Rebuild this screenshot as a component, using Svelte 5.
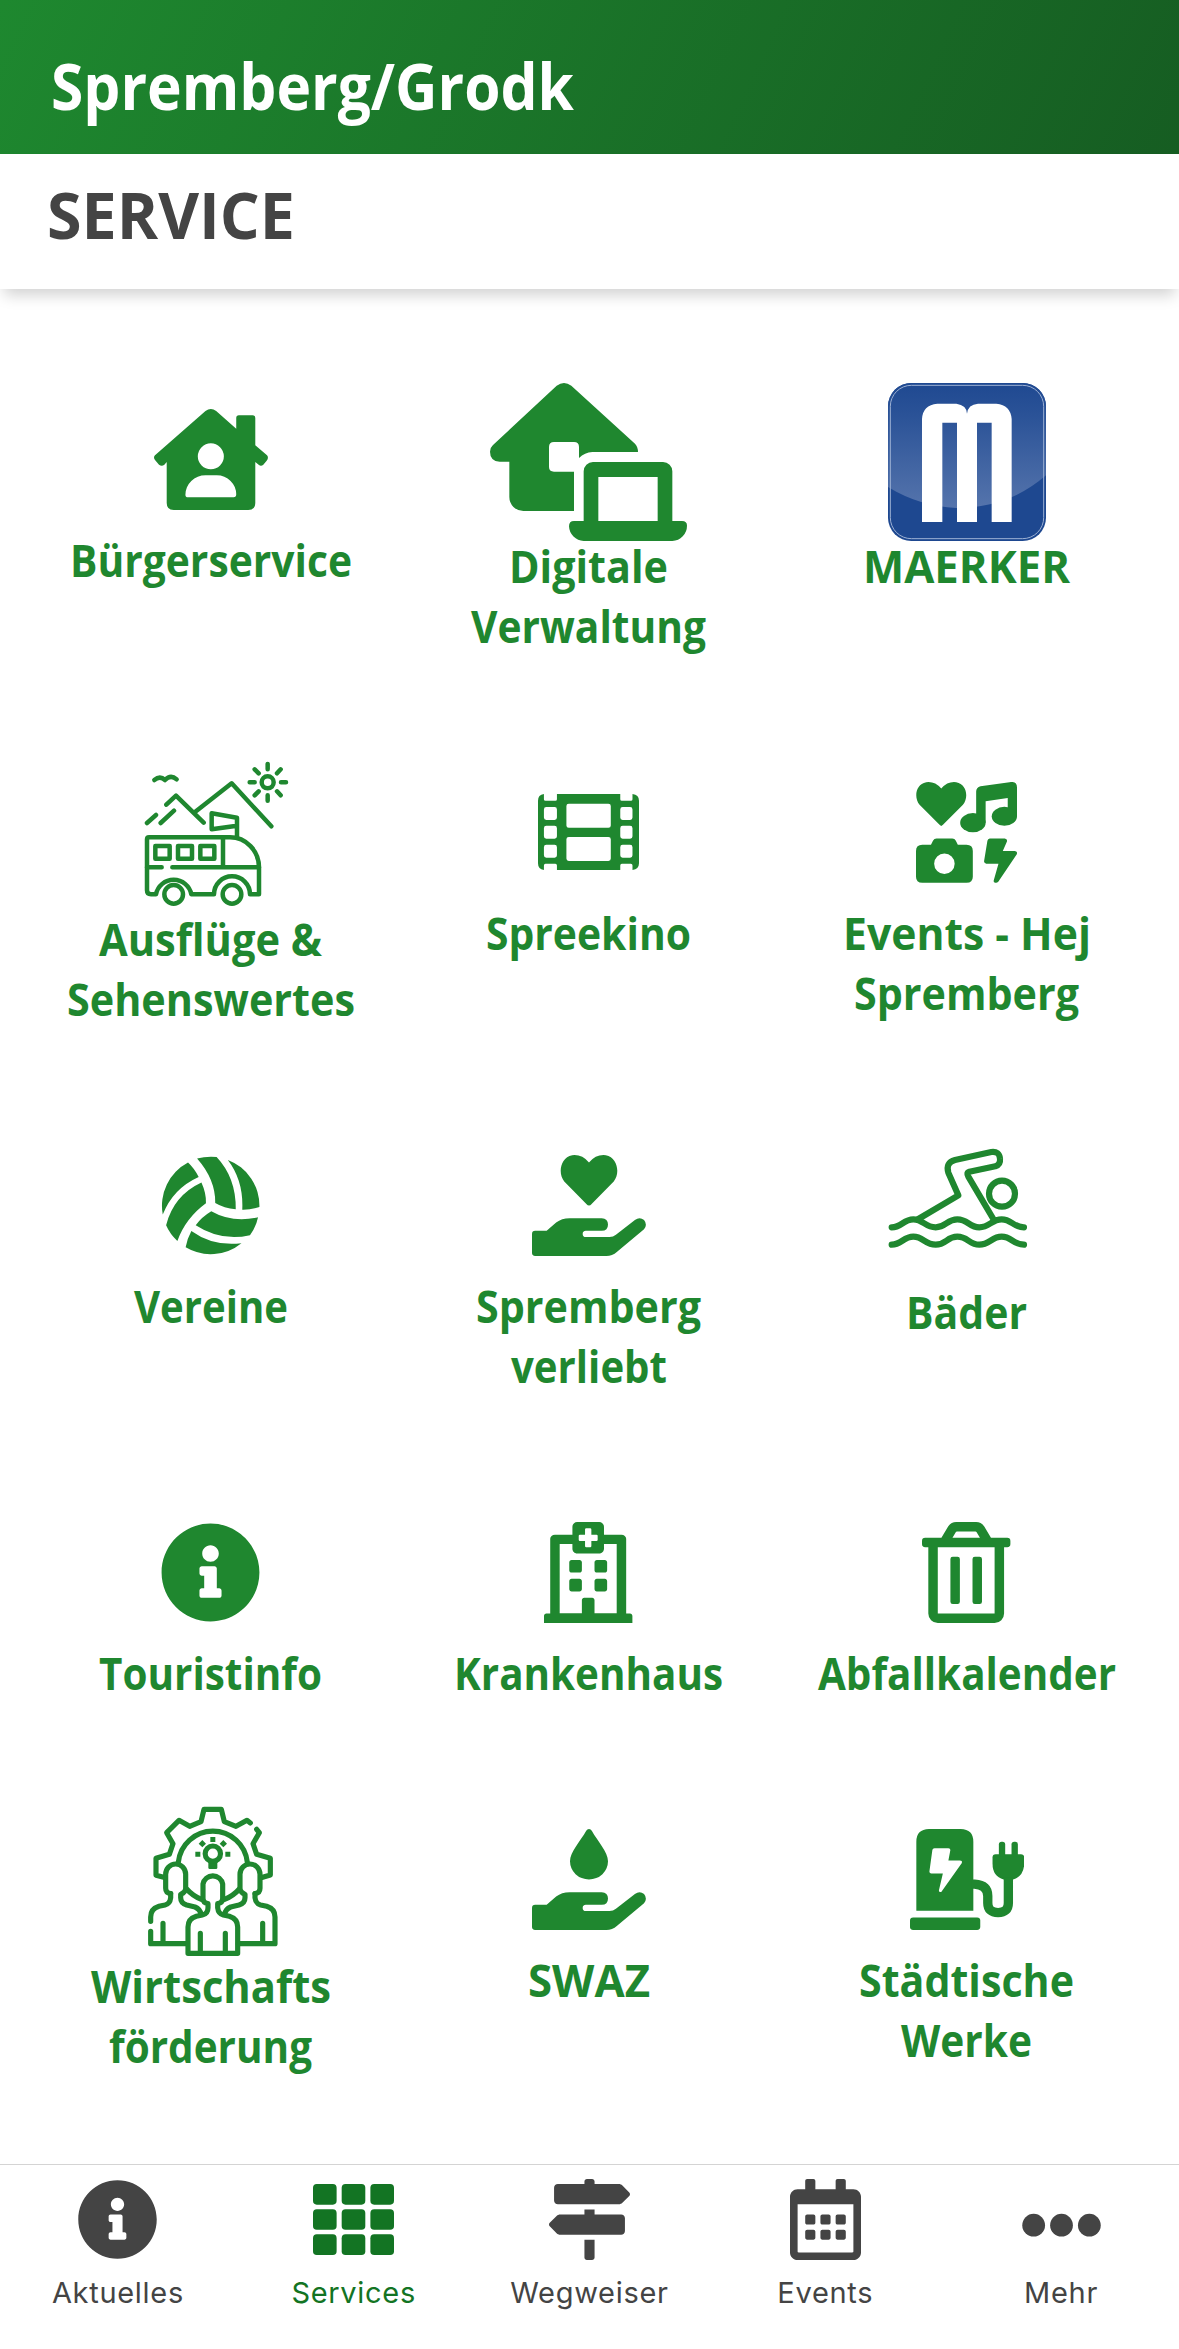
<script lang="ts">
  type Icon = {
    viewBox: string;
    width: number;
    height: number;
    fills?: string[];
    strokes?: string[];
    strokeWidth?: number;
  };

  type Line = { text: string; width: number };

  function circle(cx: number, cy: number, r: number) {
    return `M${cx - r} ${cy}a${r} ${r} 0 1 0 ${2 * r} 0a${r} ${r} 0 1 0 ${-2 * r} 0z`;
  }

  function box(x: number, y: number, w: number, h: number, r: number) {
    return `M${x + r} ${y}h${w - 2 * r}a${r} ${r} 0 0 1 ${r} ${r}v${h - 2 * r}a${r} ${r} 0 0 1 ${-r} ${r}h${2 * r - w}a${r} ${r} 0 0 1 ${-r} ${-r}v${2 * r - h}a${r} ${r} 0 0 1 ${r} ${-r}z`;
  }

  const hand =
    "M16 384H74L122 342Q150 320 190 320H352Q384 322 384 352Q384 384 352 384H272Q256 385 256 400Q256 415 272 416H392Q410 416 424 404L520 329Q545 311 566 330Q585 353 566 376L430 490Q405 512 376 512H16Q0 512 0 496V400Q0 384 16 384Z";

  const info =
    "M256 8C119.043 8 8 119.083 8 256c0 136.997 111.043 248 248 248s248-111.003 248-248C504 119.083 392.957 8 256 8zm0 110c23.196 0 42 18.804 42 42s-18.804 42-42 42-42-18.804-42-42 18.804-42 42-42zm56 254c0 6.627-5.373 12-12 12h-88c-6.627 0-12-5.373-12-12v-24c0-6.627 5.373-12 12-12h12v-64h-12c-6.627 0-12-5.373-12-12v-24c0-6.627 5.373-12 12-12h64c6.627 0 12 5.373 12 12v100h12c6.627 0 12 5.373 12 12v24z";

  const icons: { [key: string]: Icon } = {
    houseUser: {
      viewBox: "0 0 341 303",
      width: 114,
      height: 101,
      fills: [
        "M154 6Q170 -6 186 6L246 59V27Q246 19 254 19H295Q303 19 303 27V109L338 139Q344 146 337 155L327 167Q320 173 313 167L303 159V282Q303 303 282 303H59Q38 303 38 282V159L31 167Q23 173 15 167L3 153Q-3 145 3 139Z" +
          circle(170, 142, 39) +
          "M154 199H188A58 57 0 0 1 246 256Q246 265 238 265H102Q94 265 94 257A60 58 0 0 1 154 199Z",
      ],
    },
    houseLaptop: {
      viewBox: "0 0 591 474",
      width: 197,
      height: 158,
      fills: [
        "M200 8Q222 -8 244 8L435 182Q444 192 444 207H307Q284 208 267 225V192Q267 177 252 177H192Q177 177 177 192V252Q177 266 192 266H252V384H100A42 42 0 0 1 58 342V236H29Q0 234 0 206Q0 194 9 186Z",
        "M309 237H519A28 28 0 0 1 547 265V414H576Q591 414 591 428A46 46 0 0 1 547 474H281A46 46 0 0 1 237 430Q237 414 252 414H281V265A28 28 0 0 1 309 237ZM325 282V414H503V282Z",
      ],
    },
    camper: {
      viewBox: "246 48 474 474",
      width: 158,
      height: 158,
      strokeWidth: 13.5,
      strokes: [
        "M313 120Q330 106 345 120Q362 102 380 118",
        circle(653, 127, 18),
        "M653 72V88M653 166V182M599 127H614M693 127H708M614 88L626 100M692 88L681 100M614 166L626 154M692 166L681 154",
        "M435 216L545 130L664 259M349 194L378 167L461 248M291 249L318 225M332 249L372 212",
        "M561 290V233L485 220V268L561 257",
        "M297 292H540A87 90 0 0 1 627 382V463H600A54 54 0 0 0 492 463H424A54 54 0 0 0 318 463H303Q291 463 291 451V298Q291 292 297 292Z",
        "M519 292V382M367 382H627M291 382H335",
        "M316 318H359V356H316ZM384 318H426V356H384ZM451 318H493V356H451Z",
        circle(371, 463, 28) + circle(546, 463, 28),
      ],
    },
    film: {
      viewBox: "0 64 512 384",
      width: 101,
      height: 76,
      fills: [
        "M30 64V90Q30 98 38 98H88Q96 98 96 90V64H417V90Q417 98 425 98H471Q479 98 479 90V64Q512 68 512 98V414Q512 444 479 448V425Q479 417 471 417H425Q417 417 417 425V448H96V425Q96 417 88 417H38Q30 417 30 425V448Q0 444 0 414V98Q0 68 30 64Z" +
          box(30, 130, 66, 65, 12) +
          box(30, 225, 66, 65, 12) +
          box(30, 321, 66, 65, 12) +
          box(417, 130, 62, 65, 12) +
          box(417, 225, 62, 65, 12) +
          box(417, 321, 62, 65, 12) +
          box(144, 113, 225, 122, 12) +
          box(144, 281, 225, 121, 12),
      ],
    },
    hobbies: {
      viewBox: "0 0 512 512",
      width: 101,
      height: 101,
      fills: [
        "M128 223Q122 221 118 216L18 115C-12 80 -2 10 52 1Q95 -5 128 33Q161 -5 204 1C258 10 268 80 238 115L138 216Q134 221 128 223Z",
        "M305 206V48Q305 27 327 21L474 1Q512 -6 512 28V175H465V81L353 98V206Z",
        "M224 206A64 48 0 0 1 353 206A64 48 0 0 1 224 206Z",
        "M384 174A64 48 0 0 1 512 174A64 48 0 0 1 384 174Z",
        "M32 318H76L86 298Q92 286 104 286H184Q196 286 202 298L212 318H256Q288 318 288 350V480Q288 511 256 511H32Q0 511 0 480V350Q0 318 32 318Z" +
          circle(144, 414, 52),
        "M374 286H450Q464 288 461 301L440 350H500Q516 352 511 366L417 506Q408 514 396 508Q392 504 395 496L418 414H356Q344 412 345 402L362 298Q364 288 374 286Z",
      ],
    },
    volleyball: {
      viewBox: "0 0 512 512",
      width: 101,
      height: 101,
      fills: [
        "M142 38A248 248 0 0 0 14 302Q65 170 196 111Q172 65 142 38Z",
        "M210 140Q235 195 233 245Q130 320 88 436Q50 400 31 356Q70 205 210 140Z",
        "M188 18Q235 5 287 10Q386 115 384 275Q325 270 280 243Q282 125 188 18Z",
        "M344 25A248 248 0 0 1 504 263Q460 278 417 277Q424 130 344 25Z",
        "M260 285Q365 345 497 316Q487 365 456 407Q310 440 181 356Q210 315 260 285Z",
        "M159 385Q270 465 413 447A248 248 0 0 1 130 468Q138 423 159 385Z",
      ],
    },
    handHeart: {
      viewBox: "0 0 576 512",
      width: 114,
      height: 101,
      fills: [
        hand,
        "M288 256Q281 256 276 250L163 134C130 95 142 12 203 1Q252 -5 288 38Q324 -5 373 1C434 12 446 95 413 134L300 250Q295 256 288 256Z",
      ],
    },
    handDroplet: {
      viewBox: "0 0 576 512",
      width: 114,
      height: 101,
      fills: [
        hand,
        "M288 0Q297 0 302 9C331 62 384 116 384 164A96 92 0 0 1 192 164C192 116 245 62 274 9Q279 0 288 0Z",
      ],
    },
    swimmer: {
      viewBox: "114 27 474 474",
      width: 158,
      height: 158,
      strokeWidth: 18.5,
      strokes: [
        "M125 322C155 322 160 298 190 298S225 322 257 322S290 298 322 298S357 322 388 322S425 298 455 298S490 322 522 322",
        "M125 374C155 374 160 350 190 350S225 374 257 374S290 350 322 350S357 374 388 374S425 350 455 350S490 374 522 374",
        "M205 297L325 226L295 158Q286 128 315 120L424 96Q448 93 450 116Q452 134 436 139L358 155Q348 158 355 170L430 297",
        circle(456, 221, 39),
      ],
    },
    info: { viewBox: "0 0 512 512", width: 101, height: 101, fills: [info] },
    hospital: {
      viewBox: "0 0 448 512",
      width: 88.4,
      height: 101,
      fills: [
        "M128 244v-40c0-6.627 5.373-12 12-12h40c6.627 0 12 5.373 12 12v40c0 6.627-5.373 12-12 12h-40c-6.627 0-12-5.373-12-12zm140 12h40c6.627 0 12-5.373 12-12v-40c0-6.627-5.373-12-12-12h-40c-6.627 0-12 5.373-12 12v40c0 6.627 5.373 12 12 12zm-76 84v-40c0-6.627-5.373-12-12-12h-40c-6.627 0-12 5.373-12 12v40c0 6.627 5.373 12 12 12h40c6.627 0 12-5.373 12-12zm76 12h40c6.627 0 12-5.373 12-12v-40c0-6.627-5.373-12-12-12h-40c-6.627 0-12 5.373-12 12v40c0 6.627 5.373 12 12 12zm180 124v36H0v-36c0-6.627 5.373-12 12-12h19.5V85.035C31.5 73.418 42.245 64 55.5 64H144V24c0-13.255 10.745-24 24-24h112c13.255 0 24 10.745 24 24v40h88.5c13.255 0 24 9.418 24 21.035V464H436c6.627 0 12 5.373 12 12zM79.5 463H192v-67c0-6.627 5.373-12 12-12h40c6.627 0 12 5.373 12 12v67h112.5V112H304v24c0 13.255-10.745 24-24 24H168c-13.255 0-24-10.745-24-24v-24H79.5v351zM266 64h-26V38a6 6 0 0 0-6-6h-20a6 6 0 0 0-6 6v26h-26a6 6 0 0 0-6 6v20a6 6 0 0 0 6 6h26v26a6 6 0 0 0 6 6h20a6 6 0 0 0 6-6V96h26a6 6 0 0 0 6-6V70a6 6 0 0 0-6-6z",
      ],
    },
    trash: {
      viewBox: "0 0 448 512",
      width: 88.4,
      height: 101,
      fills: [
        "M268 416h24a12 12 0 0 0 12-12V188a12 12 0 0 0-12-12h-24a12 12 0 0 0-12 12v216a12 12 0 0 0 12 12zM432 80h-82.41l-34-56.7A48 48 0 0 0 274.41 0H173.59a48 48 0 0 0-41.16 23.3L98.41 80H16A16 16 0 0 0 0 96v16a16 16 0 0 0 16 16h16v336a48 48 0 0 0 48 48h288a48 48 0 0 0 48-48V128h16a16 16 0 0 0 16-16V96a16 16 0 0 0-16-16zM171.84 50.91A6 6 0 0 1 177 48h94a6 6 0 0 1 5.15 2.91L293.61 80H154.39zM368 464H80V128h288zm-212-48h24a12 12 0 0 0 12-12V188a12 12 0 0 0-12-12h-24a12 12 0 0 0-12 12v216a12 12 0 0 0 12 12z",
      ],
    },
    team: {
      viewBox: "156 66 474 474",
      width: 158,
      height: 158,
      strokeWidth: 15.5,
      strokes: [
        "M251 289L228 283V232L268 220L279 188L260 155L297 118L329 136L363 122L372 85H424L433 122L468 136L501 118L511 126",
        "M530 145L538 155L519 188L530 220L571 232V282L548 289",
        "M295 244A104 104 0 0 1 502 244M320 324Q338 345 366 356M478 324Q460 345 432 356",
        circle(398.5, 218, 23),
        "M272 338Q257 336 257 322V280A30 31 0 0 1 317 280V322Q317 334 302 340V350Q302 366 320 372L345 378Q360 384 363 400",
        "M272 338V350Q270 368 255 372L237 376Q212 384 212 408V421M212 451V488H322M249 427V485",
        "M525 338Q540 336 540 322V280A30 31 0 0 0 480 280V322Q480 334 495 340V350Q495 366 477 372L452 378Q437 384 434 400",
        "M525 338V350Q527 368 542 372L560 376Q585 384 585 408V488H475M548 427V485",
        "M384 368Q369 366 369 352V309A30 30 0 0 1 428 309V352Q428 366 413 368V380Q415 398 430 402L448 406Q473 414 473 438V517H324V438Q324 414 349 406L367 402Q384 398 384 380Z",
        "M361 457V515M436 457V515",
      ],
      fills: [
        box(385, 240, 27, 24, 4),
        "M391 168H406V183H391ZM346 212H361V227H346ZM436 212H451V227H436ZM367 177L378 188L367 199L356 188ZM430 177L441 188L430 199L419 188Z",
      ],
    },
    charging: {
      viewBox: "0 0 576 512",
      width: 114,
      height: 101,
      strokeWidth: 47,
      strokes: [
        "M310 280H326Q393 284 393 340V375Q393 424 445 424Q497 424 497 375V245",
      ],
      fills: [
        "M96 0H256Q320 2 320 64V415H32V64Q32 2 96 0ZM124 97Q114 97 113 107L98 215Q98 225 108 225H166L146 312Q146 322 158 319L262 172Q265 160 252 160H194L204 107Q204 97 194 97Z",
        box(0, 448, 355, 64, 16),
        "M433 128H561Q577 128 577 144V176Q575 240 521 256H473Q417 240 417 176V144Q417 128 433 128Z",
        box(449, 64, 32, 78, 14),
        box(513, 64, 32, 78, 14),
      ],
    },
    navInfo: { viewBox: "0 0 512 512", width: 81, height: 81, fills: [info] },
    navGrid: {
      viewBox: "0 0 512 512",
      width: 81,
      height: 81,
      fills: [0, 181.3, 362.7].flatMap((x) =>
        [32, 191, 350].map((y) => box(x, y, 149.3, 130, 24))
      ),
    },
    navSigns: {
      viewBox: "0 0 512 512",
      width: 81,
      height: 81,
      fills: [
        "M507.31 84.69L464 41.37c-6-6-14.14-9.37-22.63-9.37H288V16c0-8.84-7.16-16-16-16h-32c-8.84 0-16 7.16-16 16v16H56c-13.25 0-24 10.75-24 24v80c0 13.25 10.75 24 24 24h385.37c8.49 0 16.62-3.37 22.63-9.37l43.31-43.31c6.25-6.26 6.25-16.38 0-22.63zM224 496c0 8.84 7.16 16 16 16h32c8.84 0 16-7.16 16-16V384h-64v112zm232-272H288v-32h-64v32H70.63c-8.49 0-16.62 3.37-22.63 9.37L4.69 276.69c-6.25 6.25-6.25 16.38 0 22.63L48 342.63c6 6 14.14 9.37 22.63 9.37H456c13.25 0 24-10.75 24-24v-80c0-13.25-10.75-24-24-24z",
      ],
    },
    navCalendar: {
      viewBox: "0 0 448 512",
      width: 71,
      height: 81,
      fills: [
        "M148 288h-40c-6.6 0-12-5.4-12-12v-40c0-6.6 5.4-12 12-12h40c6.6 0 12 5.4 12 12v40c0 6.6-5.4 12-12 12zm108-12v-40c0-6.6-5.4-12-12-12h-40c-6.6 0-12 5.4-12 12v40c0 6.6 5.4 12 12 12h40c6.6 0 12-5.4 12-12zm96 0v-40c0-6.6-5.4-12-12-12h-40c-6.6 0-12 5.4-12 12v40c0 6.6 5.4 12 12 12h40c6.6 0 12-5.4 12-12zm-96 96v-40c0-6.6-5.4-12-12-12h-40c-6.6 0-12 5.4-12 12v40c0 6.6 5.4 12 12 12h40c6.6 0 12-5.4 12-12zm-96 0v-40c0-6.6-5.4-12-12-12h-40c-6.6 0-12 5.4-12 12v40c0 6.6 5.4 12 12 12h40c6.6 0 12-5.4 12-12zm192 0v-40c0-6.6-5.4-12-12-12h-40c-6.6 0-12 5.4-12 12v40c0 6.6 5.4 12 12 12h40c6.6 0 12-5.4 12-12zm96-260v352c0 26.5-21.5 48-48 48H48c-26.5 0-48-21.5-48-48V112c0-26.5 21.5-48 48-48h48V12c0-6.6 5.4-12 12-12h40c6.6 0 12 5.4 12 12v52h128V12c0-6.6 5.4-12 12-12h40c6.6 0 12 5.4 12 12v52h48c26.5 0 48 21.5 48 48zm-48 346V160H48v298c0 3.3 2.7 6 6 6h340c3.3 0 6-2.7 6-6z",
      ],
    },
    navMore: {
      viewBox: "0 -36 512 512",
      width: 81,
      height: 81,
      fills: [circle(80, 256, 72), circle(256, 256, 72), circle(432, 256, 72)],
    },
  };

  // picture: the tile shows a square image instead of a font-sized icon
  const services: { icon: string; picture?: boolean; lines: Line[] }[] = [
    { icon: "houseUser", lines: [{ text: "Bürgerservice", width: 282 }] },
    {
      icon: "houseLaptop",
      picture: true,
      lines: [
        { text: "Digitale", width: 159 },
        { text: "Verwaltung", width: 235 },
      ],
    },
    { icon: "maerker", picture: true, lines: [{ text: "MAERKER", width: 207 }] },
    {
      icon: "camper",
      picture: true,
      lines: [
        { text: "Ausflüge &", width: 223 },
        { text: "Sehenswertes", width: 288 },
      ],
    },
    { icon: "film", lines: [{ text: "Spreekino", width: 205 }] },
    {
      icon: "hobbies",
      lines: [
        { text: "Events - Hej", width: 248 },
        { text: "Spremberg", width: 225 },
      ],
    },
    { icon: "volleyball", lines: [{ text: "Vereine", width: 154 }] },
    {
      icon: "handHeart",
      lines: [
        { text: "Spremberg", width: 225 },
        { text: "verliebt", width: 156 },
      ],
    },
    { icon: "swimmer", picture: true, lines: [{ text: "Bäder", width: 121 }] },
    { icon: "info", lines: [{ text: "Touristinfo", width: 223 }] },
    { icon: "hospital", lines: [{ text: "Krankenhaus", width: 269 }] },
    { icon: "trash", lines: [{ text: "Abfallkalender", width: 298 }] },
    {
      icon: "team",
      picture: true,
      lines: [
        { text: "Wirtschafts", width: 240 },
        { text: "förderung", width: 203 },
      ],
    },
    { icon: "handDroplet", lines: [{ text: "SWAZ", width: 122 }] },
    {
      icon: "charging",
      lines: [
        { text: "Städtische", width: 215 },
        { text: "Werke", width: 131 },
      ],
    },
  ];

  const tabs = [
    { icon: "navInfo", label: "Aktuelles" },
    { icon: "navGrid", label: "Services" },
    { icon: "navSigns", label: "Wegweiser" },
    { icon: "navCalendar", label: "Events" },
    { icon: "navMore", label: "Mehr" },
  ];

  let activeTab = $state("Services");
</script>

{#snippet glyph(name: string)}
  {@const icon = icons[name]}
  <svg
    viewBox={icon.viewBox}
    width={icon.width}
    height={icon.height}
    preserveAspectRatio="none"
    aria-hidden="true"
  >
    {#each icon.fills ?? [] as d}
      <path {d} fill="currentColor" fill-rule="evenodd" />
    {/each}
    {#each icon.strokes ?? [] as d}
      <path
        {d}
        fill="none"
        stroke="currentColor"
        stroke-width={icon.strokeWidth}
        stroke-linecap={name === "charging" ? "butt" : "round"}
        stroke-linejoin="round"
      />
    {/each}
  </svg>
{/snippet}

{#snippet maerker()}
  <svg viewBox="0 0 474 474" width="158" height="158" aria-hidden="true">
    <defs>
      <linearGradient id="gloss" x1="0" y1="0" x2="0" y2="1">
        <stop offset="0" stop-color="#1f4991" />
        <stop offset="0.25" stop-color="#2a5297" />
        <stop offset="1" stop-color="#5574ac" />
      </linearGradient>
      <clipPath id="tile">
        <rect width="474" height="474" rx="70" />
      </clipPath>
    </defs>
    <g clip-path="url(#tile)">
      <rect width="474" height="474" fill="#1e4890" />
      <path d="M0 0H474V277Q362 375 205 375Q95 370 0 312Z" fill="url(#gloss)" />
    </g>
    <rect
      x="7"
      y="7"
      width="460"
      height="460"
      rx="63"
      fill="none"
      stroke="#9cb0d3"
      stroke-width="3"
    />
    <path
      d="M102 417V108Q104 66 148 62H205Q236 66 237 92Q240 64 270 62H325Q368 66 371 108V417H311V119H267V417H207V119H163V417Z"
      fill="#fff"
    />
  </svg>
{/snippet}

{#snippet fitted(line: Line, height: number, baseline: number)}
  <svg class="fitted" width={line.width} {height}>
    <text
      x="0"
      y={baseline}
      textLength={line.width}
      lengthAdjust="spacingAndGlyphs">{line.text}</text
    >
  </svg>
{/snippet}

<div class="app">
  <header>
    {@render fitted({ text: "Spremberg/Grodk", width: 523 }, 90, 70)}
  </header>
  <div class="page-title">
    {@render fitted({ text: "SERVICE", width: 248 }, 90, 70)}
  </div>

  <main>
    {#each services as service}
      <div class="service">
        <div class="service-icon" class:picture={service.picture}>
          {#if service.icon === "maerker"}
            {@render maerker()}
          {:else}
            {@render glyph(service.icon)}
          {/if}
        </div>
        {#each service.lines as line}
          {@render fitted(line, 60, 42)}
        {/each}
      </div>
    {/each}
  </main>

  <nav>
    {#each tabs as tab}
      <button
        class:active={activeTab === tab.label}
        onclick={() => (activeTab = tab.label)}
      >
        {@render glyph(tab.icon)}
        <span>{tab.label}</span>
      </button>
    {/each}
  </nav>
</div>

<style>
  :global(body) {
    margin: 0;
    background: #fff;
  }
  .app {
    display: flex;
    flex-direction: column;
    width: 1179px;
    height: 2349px;
    overflow: hidden;
    font-family: "Open Sans", "Noto Sans", sans-serif;
  }
  svg {
    display: block;
    flex: none;
  }
  .fitted {
    overflow: visible;
    fill: currentColor;
  }
  header {
    box-sizing: border-box;
    height: 154px;
    padding: 40px 51px 0;
    background: linear-gradient(115deg, #1e882f 0%, #165d22 100%);
    color: #fff;
    font-size: 64.5px;
    font-weight: 700;
  }
  .page-title {
    box-sizing: border-box;
    height: 135px;
    padding: 15px 47px 0;
    background: #fff;
    box-shadow: 0 10px 14px -4px rgba(0, 0, 0, 0.18);
    color: #444;
    font-size: 64.5px;
    font-weight: 700;
  }
  main {
    flex: 1;
    display: grid;
    grid-template-columns: repeat(3, 378px);
    justify-content: center;
    align-content: start;
    row-gap: 95px;
    padding: 94px 2px 0 0;
    color: #1f872f;
    font-size: 45px;
    font-weight: 700;
  }
  .service {
    display: flex;
    flex-direction: column;
    align-items: center;
  }
  .service-icon {
    display: flex;
    align-items: center;
    justify-content: center;
    height: 152px;
  }
  .service-icon.picture {
    height: 158px;
  }
  nav {
    box-sizing: border-box;
    display: flex;
    height: 185px;
    border-top: 1px solid #d4d4d4;
    background: #fff;
  }
  button {
    flex: 1;
    display: flex;
    flex-direction: column;
    align-items: center;
    gap: 14px;
    padding: 14px 0 0;
    border: none;
    background: none;
    color: #444;
    font-family: Inter, sans-serif;
    font-size: 29px;
    line-height: 38px;
    letter-spacing: 0.7px;
    cursor: pointer;
  }
  .active {
    color: #137423;
  }
</style>
